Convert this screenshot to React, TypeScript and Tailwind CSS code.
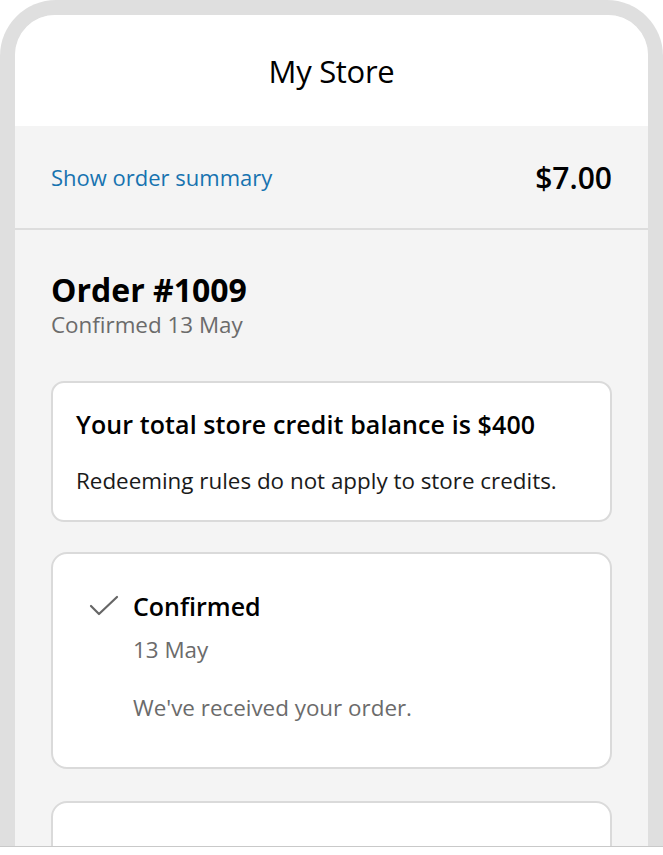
export default function App() {
  const font = { fontFamily: '"Segoe UI", "Open Sans", "Noto Sans", sans-serif' }

  return (
    <div className="w-[663px] h-[855px] bg-white" style={font}>
      <div className="h-[847px] bg-[#dfdfdf] rounded-t-[56px] pt-[15px] px-[15px] border-b border-[#c9c9c9]">
        <div className="h-full bg-[#f4f4f4] rounded-t-[40px] overflow-hidden">
          {/* header */}
          <div className="h-[111px] bg-white flex items-center justify-center">
            <h1 className="text-[31px] text-black tracking-[-0.3px] leading-[40px]">My Store</h1>
          </div>

          {/* order summary toggle */}
          <div className="h-[104px] border-b-2 border-[#dddddd] px-9 flex items-center justify-between">
            <span className="text-[22px] text-[#1773b0]">Show order summary</span>
            <span className="text-[30px] font-semibold text-black">$7.00</span>
          </div>

          <div className="px-9 pt-[40px]">
            <h2 className="text-[32px] font-bold text-black leading-[40px]">Order #1009</h2>
            <p className="text-[22.4px] text-[#6b6b6b] leading-[30px]">Confirmed 13 May</p>

            <div className="mt-[41px] h-[141px] bg-white border-2 border-[#dadada] rounded-[13px] px-[23px] flex flex-col justify-center gap-[25px]">
              <p className="text-[25px] font-semibold text-black leading-[34px] tracking-[0.1px]">
                Your total store credit balance is $400
              </p>
              <p className="text-[22.4px] text-[#1a1a1a] leading-[30px]">
                Redeeming rules do not apply to store credits.
              </p>
            </div>

            <div className="mt-[30px] h-[217px] bg-white border-2 border-[#dadada] rounded-[16px] pl-[36px] pt-[36px]">
              <div className="flex items-center gap-[14px] h-[32px]">
                <svg width="30" height="22" viewBox="0 0 30 22" className="shrink-0">
                  <polyline
                    points="2,11 10,19 28,2"
                    fill="none"
                    stroke="#666666"
                    strokeWidth="2.2"
                    strokeLinecap="round"
                    strokeLinejoin="round"
                  />
                </svg>
                <span className="text-[25px] font-semibold text-black leading-[32px]">Confirmed</span>
              </div>
              <p className="ml-[44px] mt-[13px] text-[22.4px] text-[#6b6b6b] leading-[30px]">13 May</p>
              <p className="ml-[44px] mt-[28px] text-[22.4px] text-[#6b6b6b] leading-[30px]">
                We've received your order.
              </p>
            </div>

            <div className="mt-[32px] h-[80px] bg-white border-2 border-[#dadada] rounded-[16px]" />
          </div>
        </div>
      </div>
    </div>
  )
}
